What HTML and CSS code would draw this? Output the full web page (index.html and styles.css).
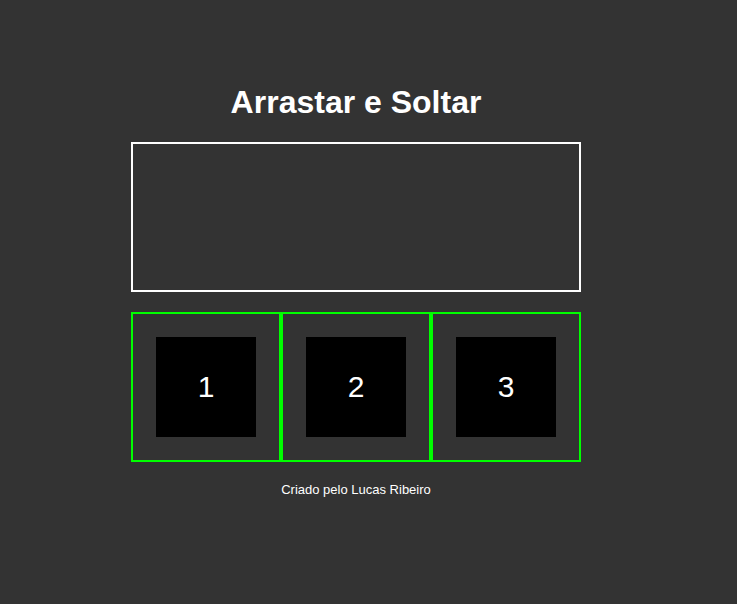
FILE: index.html
```html
<!DOCTYPE html>
<html lang="pt">
<head>
<meta charset="utf-8">
<title>Arrastar e Soltar</title>
<link rel="stylesheet" href="styles.css">
</head>
<body>
<main class="page">
  <h1 class="title">Arrastar e Soltar</h1>
  <div class="dropzone"></div>
  <div class="slots">
    <div class="slot"><div class="item">1</div></div>
    <div class="slot"><div class="item">2</div></div>
    <div class="slot"><div class="item">3</div></div>
  </div>
  <footer class="footer">Criado pelo Lucas Ribeiro</footer>
</main>
</body>
</html>
```
FILE: styles.css
```css
html, body {
  margin: 0;
  padding: 0;
  background: #333333;
  color: #ffffff;
  font-family: "Liberation Sans", Arial, sans-serif;
}
.page {
  width: 450px;
  margin-left: 131px;
  padding-top: 84px;
  display: flex;
  flex-direction: column;
}
.title {
  margin: 0 0 21px;
  font-size: 32px;
  line-height: 37px;
  font-weight: bold;
  text-align: center;
}
.dropzone {
  box-sizing: border-box;
  height: 150px;
  border: 2px solid #ffffff;
  margin-bottom: 20px;
}
.slots {
  display: flex;
}
.slot {
  box-sizing: border-box;
  width: 150px;
  height: 150px;
  border: 2px solid #00ff00;
  display: flex;
  align-items: center;
  justify-content: center;
}
.item {
  width: 100px;
  height: 100px;
  background: #000000;
  color: #ffffff;
  font-size: 30px;
  display: flex;
  align-items: center;
  justify-content: center;
}
.footer {
  margin-top: 20px;
  font-size: 13px;
  line-height: 15px;
  text-align: center;
}
```
